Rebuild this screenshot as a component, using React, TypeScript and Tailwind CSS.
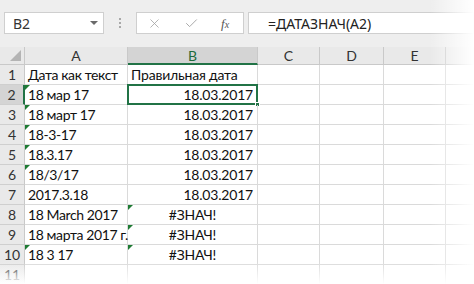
import { Check, X } from "lucide-react";

const cols = [
  { key: "A", w: "w-[103px]" },
  { key: "B", w: "w-[130px]" },
  { key: "C", w: "w-[62px]" },
  { key: "D", w: "w-[64px]" },
  { key: "E", w: "w-[62px]" },
  { key: "F", w: "flex-1" },
];

type Row = { a?: string; b?: string; aFlag?: boolean; bFlag?: boolean; err?: boolean };

const rows: Row[] = [
  { a: "Дата как текст", b: "Правильная дата" },
  { a: "18 мар 17", b: "18.03.2017", aFlag: true },
  { a: "18 март 17", b: "18.03.2017", aFlag: true },
  { a: "18-3-17", b: "18.03.2017", aFlag: true },
  { a: "18.3.17", b: "18.03.2017", aFlag: true },
  { a: "18/3/17", b: "18.03.2017", aFlag: true },
  { a: "2017.3.18", b: "18.03.2017" },
  { a: "18 March 2017", b: "#ЗНАЧ!", bFlag: true, err: true },
  { a: "18 марта 2017 г.", b: "#ЗНАЧ!", bFlag: true, err: true },
  { a: "18 3 17", b: "#ЗНАЧ!", aFlag: true, bFlag: true, err: true },
  {},
];

function Flag() {
  return (
    <span className="absolute left-0 top-0 w-0 h-0 border-t-[5px] border-r-[5px] border-t-[#1e7b34] border-r-transparent" />
  );
}

function Toolbar() {
  return (
    <div className="h-[47px] bg-[#eeeeee] flex items-start pt-[12px] pl-[4px] font-['Noto_Sans',sans-serif]">
      <div className="w-[100px] h-[22px] bg-white border border-[#cfcfcf] flex items-center justify-between pl-[8px] pr-[5px] text-[14px] text-[#333]">
        <span>B2</span>
        <span className="w-0 h-0 border-l-[4px] border-r-[4px] border-t-[4px] border-l-transparent border-r-transparent border-t-[#6a6a6a]" />
      </div>
      <div className="w-[32px] h-[22px] flex flex-col items-center justify-center gap-[2px]">
        <span className="w-[2px] h-[2px] bg-[#a8a8a8]" />
        <span className="w-[2px] h-[2px] bg-[#a8a8a8]" />
        <span className="w-[2px] h-[2px] bg-[#a8a8a8]" />
      </div>
      <div className="w-[108px] h-[22px] bg-white border border-[#cfcfcf] flex items-center">
        <X size={15} strokeWidth={1.3} className="text-[#a3a3a3] ml-[10px]" />
        <Check size={15} strokeWidth={1.5} className="text-[#a3a3a3] ml-[22px]" />
        <span className="ml-[22px] text-[13px] text-[#555] italic font-['Liberation_Serif',serif] leading-none">
          f<span className="text-[10px]">x</span>
        </span>
      </div>
      <div className="ml-[4px] flex-1 h-[22px] bg-white border border-[#cfcfcf] flex items-center pl-[19px] text-[14px] text-[#222]">
        =ДАТАЗНАЧ(А2)
      </div>
    </div>
  );
}

function Header() {
  return (
    <div className="flex h-[18px] bg-[#e9e9e9] text-[14px] text-[#333]">
      <div className="w-[25px] border-r border-b border-[#c9c9c9] relative">
        <span className="absolute right-[3px] bottom-[3px] w-0 h-0 border-b-[11px] border-l-[11px] border-b-[#b4b4b4] border-l-transparent" />
      </div>
      {cols.map((c) => (
        <div
          key={c.key}
          className={`${c.w} flex items-center justify-center border-r border-[#c9c9c9] ${
            c.key === "B"
              ? "bg-[#d4d4d4] border-b-2 border-b-[#217346] text-[#1e6b3c]"
              : "border-b"
          }`}
        >
          {c.key !== "F" && c.key}
        </div>
      ))}
    </div>
  );
}

export default function App() {
  return (
    <div className="w-[474px] h-[284px] relative overflow-hidden bg-white font-['Lato',sans-serif]">
      <Toolbar />
      <Header />
      {rows.map((r, i) => (
        <div key={i} className="flex h-[20px] text-[14px] text-[#111]">
          <div
            className={`w-[25px] flex items-center justify-center text-[14px] text-[#333] border-b border-[#cfcfcf] ${
              i === 1 ? "bg-[#d4d4d4] border-r-2 border-r-[#217346] text-[#1e6b3c]" : "bg-[#e9e9e9] border-r border-r-[#c9c9c9]"
            }`}
          >
            {i + 1}
          </div>
          <div className="w-[103px] relative flex items-center pl-[3px] border-r border-b border-[#dadada] whitespace-nowrap tracking-[-0.4px]">
            {r.aFlag && <Flag />}
            <span className="relative">{r.a}</span>
          </div>
          <div
            className={`w-[130px] relative flex items-center px-[4px] border-r border-b border-[#dadada] whitespace-nowrap tracking-[-0.2px] ${
              i === 0 ? "justify-start pl-[3px]" : r.err ? "justify-center" : "justify-end"
            }`}
          >
            {r.bFlag && <Flag />}
            {i === 1 && (
              <span className="absolute -left-[1px] -top-[1px] w-[131px] h-[21px] border-2 border-[#217346]">
                <span className="absolute -right-[4px] -bottom-[4px] w-[5px] h-[5px] bg-[#217346] border border-white" />
              </span>
            )}
            {r.b}
          </div>
          <div className="w-[62px] border-r border-b border-[#dadada]" />
          <div className="w-[64px] border-r border-b border-[#dadada]" />
          <div className="w-[62px] border-r border-b border-[#dadada]" />
          <div className="flex-1 border-b border-[#dadada]" />
        </div>
      ))}
      <div className="absolute top-0 right-0 h-full w-[44px] bg-gradient-to-r from-transparent to-white pointer-events-none" />
      <div className="absolute bottom-0 left-0 w-full h-[22px] bg-gradient-to-b from-transparent to-white pointer-events-none" />
    </div>
  );
}
